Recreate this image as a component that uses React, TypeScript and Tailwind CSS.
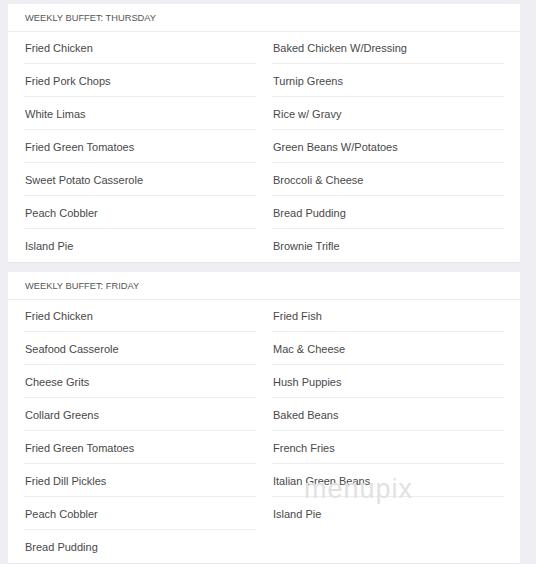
import React from 'react'

type Menu = {
  title: string
  left: string[]
  right: string[]
}

const menus: Menu[] = [
  {
    title: 'WEEKLY BUFFET: THURSDAY',
    left: ['Fried Chicken', 'Fried Pork Chops', 'White Limas', 'Fried Green Tomatoes', 'Sweet Potato Casserole', 'Peach Cobbler', 'Island Pie'],
    right: ['Baked Chicken W/Dressing', 'Turnip Greens', 'Rice w/ Gravy', 'Green Beans W/Potatoes', 'Broccoli & Cheese', 'Bread Pudding', 'Brownie Trifle'],
  },
  {
    title: 'WEEKLY BUFFET: FRIDAY',
    left: ['Fried Chicken', 'Seafood Casserole', 'Cheese Grits', 'Collard Greens', 'Fried Green Tomatoes', 'Fried Dill Pickles', 'Peach Cobbler', 'Bread Pudding'],
    right: ['Fried Fish', 'Mac & Cheese', 'Hush Puppies', 'Baked Beans', 'French Fries', 'Italian Green Beans', 'Island Pie'],
  },
]

function Column({ items }: { items: string[] }) {
  return (
    <ul className="divide-y divide-[#ececec]">
      {items.map((it) => (
        <li key={it} className="flex h-[33px] items-center pl-px pt-[2px] text-[11px] text-[#484848] first:h-[32px]">
          {it}
        </li>
      ))}
    </ul>
  )
}

function MenuCard({ menu }: { menu: Menu }) {
  return (
    <section className="bg-white shadow-[0_1px_0_#e4e4ea]">
      <header className="flex h-[28px] items-center border-b border-[#ececec] pl-[17px] pt-[2px] text-[9.3px] text-[#555]">
        {menu.title}
      </header>
      <div className="grid grid-cols-2 gap-4 px-4">
        <Column items={menu.left} />
        <Column items={menu.right} />
      </div>
    </section>
  )
}

export default function App() {
  return (
    <div
      className="relative h-[564px] w-[536px] overflow-hidden bg-[#eeeef3] pl-2 pr-4 pt-[4px]"
      style={{ fontFamily: '"Liberation Sans", Arial, sans-serif' }}
    >
      <div className="flex flex-col gap-[10px]">
        {menus.map((m) => (
          <MenuCard key={m.title} menu={m} />
        ))}
      </div>
      <span className="pointer-events-none absolute left-[304px] top-[469px] text-[27px] font-light tracking-[1px] text-[#e2e2e2]">
        menupix
      </span>
    </div>
  )
}
